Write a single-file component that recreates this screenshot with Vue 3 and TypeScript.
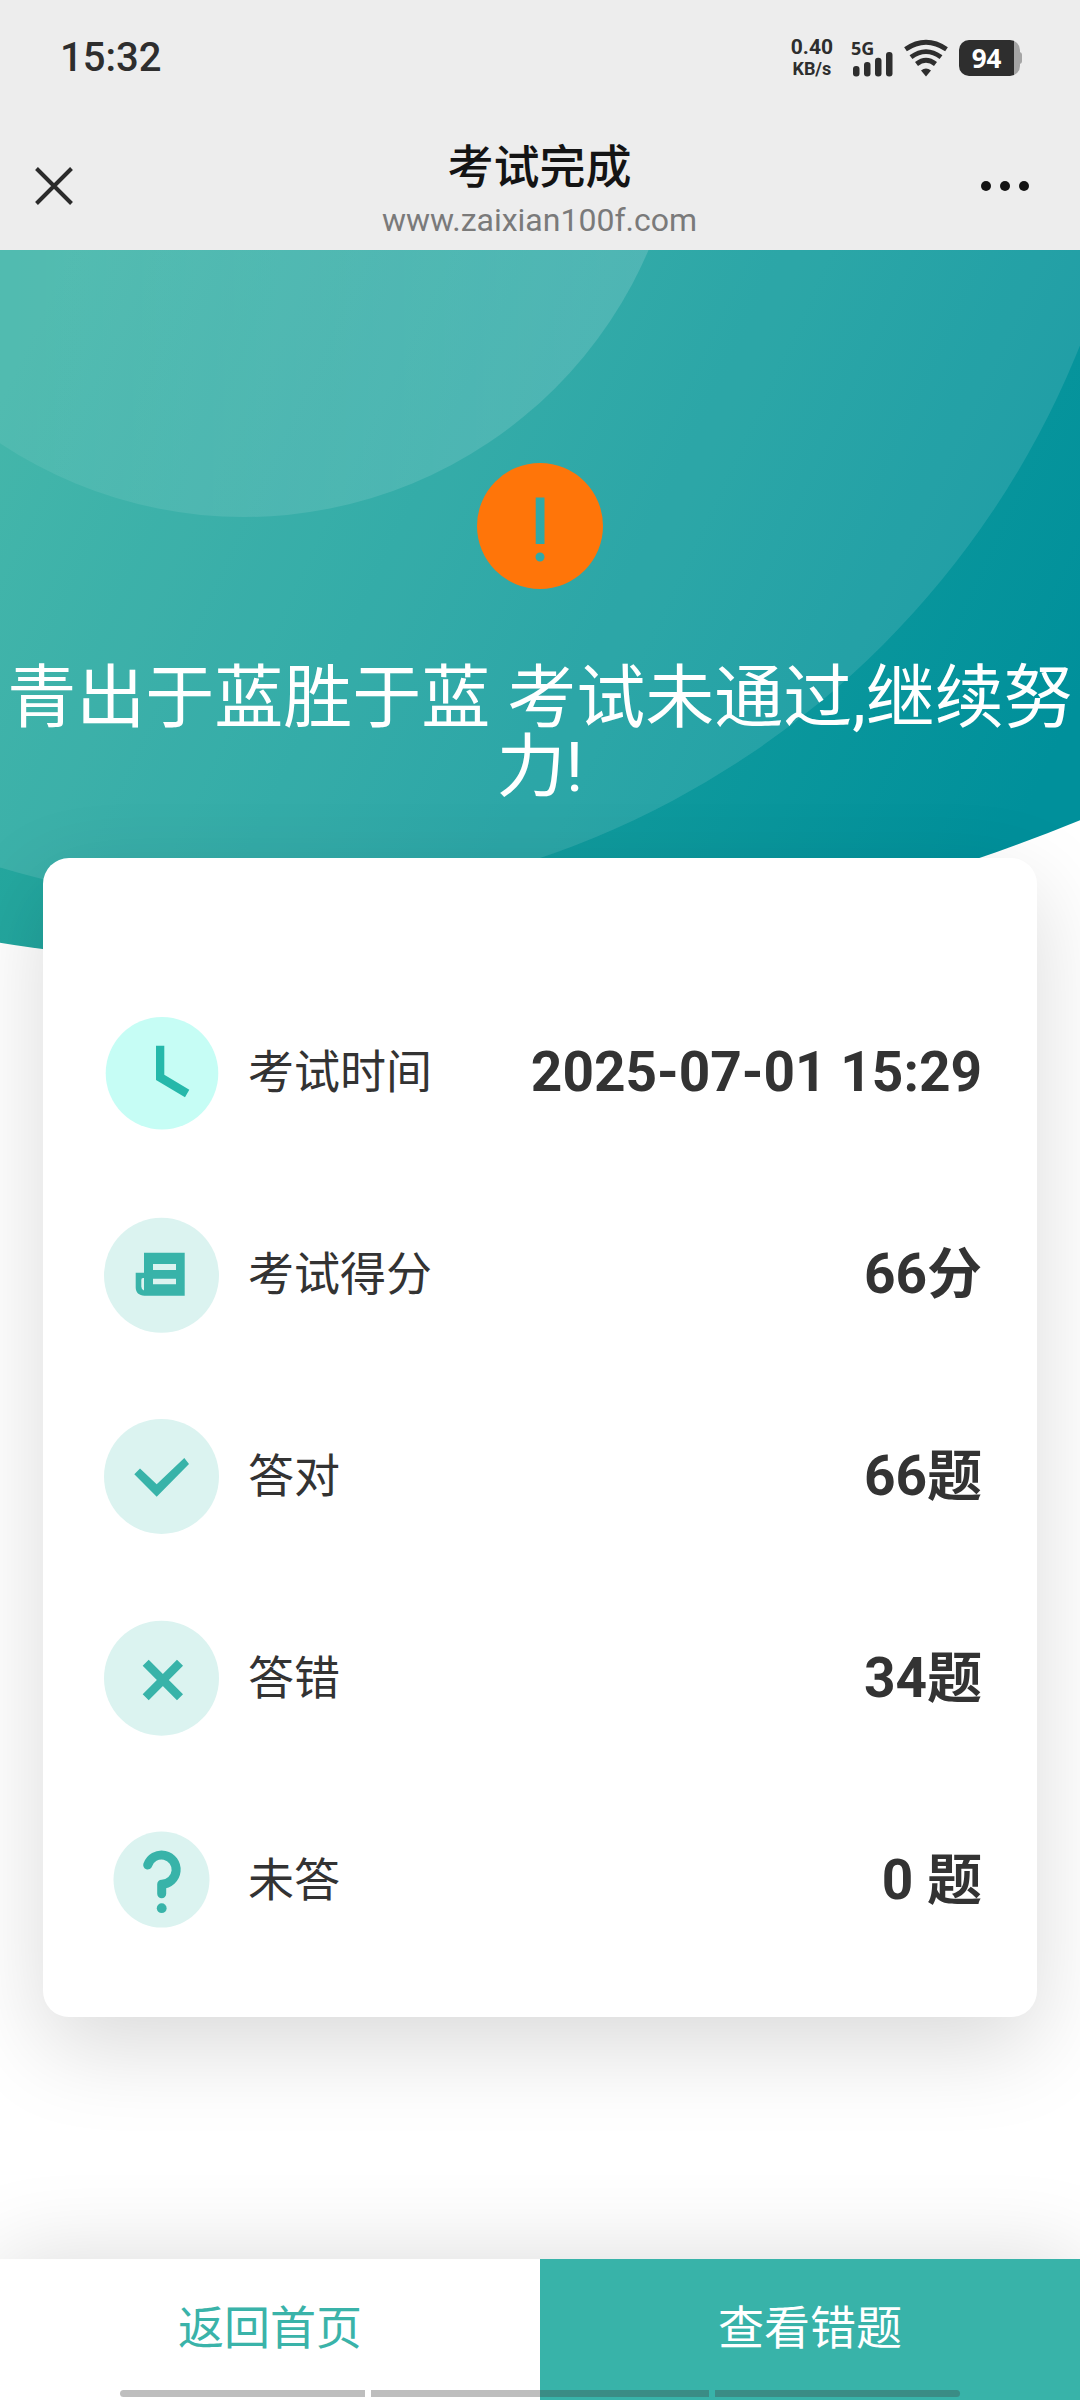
<script setup lang="ts">
type IconName = 'clock' | 'paper' | 'check' | 'cross' | 'question'

interface ResultRow {
  icon: IconName
  label: string
  value: string
}

const rows: ResultRow[] = [
  { icon: 'clock', label: '考试时间', value: '2025-07-01 15:29' },
  { icon: 'paper', label: '考试得分', value: '66分' },
  { icon: 'check', label: '答对', value: '66题' },
  { icon: 'cross', label: '答错', value: '34题' },
  { icon: 'question', label: '未答', value: '0 题' },
]
</script>

<template>
  <div class="page">
    <header class="top">
      <div class="status">
        <span class="time">15:32</span>
        <div class="indicators">
          <div class="speed">
            <span class="speed-value">0.40</span>
            <span class="speed-unit">KB/s</span>
          </div>
          <div class="signal">
            <span class="network">5G</span>
            <svg class="bars" width="42" height="26" viewBox="0 0 42 26" fill="currentColor" aria-hidden="true">
              <rect x="2" y="15" width="6.5" height="10.5" rx="3" />
              <rect x="13" y="11" width="6.5" height="14.5" rx="3" />
              <rect x="24" y="6.700" width="6.5" height="18.800" rx="3" />
              <rect x="35" y="1" width="6.5" height="24.500" rx="3" />
            </svg>
          </div>
          <svg class="wifi" width="46" height="38" viewBox="0 0 46 38" fill="none" stroke="currentColor" stroke-width="4.800" aria-hidden="true">
            <path d="M2.500 10.200Q23 -3.800 43.500 10.200" />
            <path d="M8 18.200Q23 7 38 18.200" />
            <path d="M13.500 25Q23 17.500 32.500 25" />
            <path d="M18 31.500Q23 27.500 28 31.500L23 37.500Z" fill="currentColor" stroke="none" />
          </svg>
          <div class="battery">94</div>
        </div>
      </div>
      <nav class="bar">
        <button class="icon-button" type="button" aria-label="关闭">
          <svg width="38" height="38" viewBox="0 0 38 38" fill="none" stroke="#2b2b2b" stroke-width="4" aria-hidden="true">
            <path d="M1.500 1.500L36.500 36.500M36.500 1.500L1.500 36.500" />
          </svg>
        </button>
        <div class="heading">
          <h1>考试完成</h1>
          <span class="host">www.zaixian100f.com</span>
        </div>
        <button class="icon-button more" type="button" aria-label="更多">
          <svg width="50" height="12" viewBox="0 0 50 12" fill="#141414" aria-hidden="true">
            <circle cx="6" cy="6" r="5" />
            <circle cx="25" cy="6" r="5" />
            <circle cx="44" cy="6" r="5" />
          </svg>
        </button>
      </nav>
    </header>

    <main class="content">
      <svg class="backdrop" viewBox="0 0 1080 720" aria-hidden="true">
        <defs>
          <linearGradient id="sea" gradientUnits="userSpaceOnUse" x1="0" y1="150" x2="1000" y2="620">
            <stop offset="0" stop-color="#2dada0" />
            <stop offset="1" stop-color="#00909b" />
          </linearGradient>
          <linearGradient id="veil" gradientUnits="userSpaceOnUse" x1="0" y1="0" x2="684" y2="0">
            <stop offset="0" stop-color="#fff" stop-opacity="0.070" />
            <stop offset="1" stop-color="#fff" stop-opacity="0.150" />
          </linearGradient>
          <clipPath id="hill"><circle cx="323" cy="-1281" r="2000" /></clipPath>
        </defs>
        <g clip-path="url(#hill)">
          <rect width="1080" height="720" fill="url(#sea)" />
          <circle cx="255" cy="-233" r="888" fill="#fff" fill-opacity="0.110" />
          <circle cx="244" cy="-173" r="440" fill="url(#veil)" />
        </g>
      </svg>

      <section class="outcome">
        <svg width="126" height="126" viewBox="0 0 126 126" aria-hidden="true">
          <path
            fill="#ff7509"
            fill-rule="evenodd"
            d="M63 0a63 63 0 1 1 0 126a63 63 0 1 1 0-126ZM58.700 34.500h8.800v46.500h-8.800ZM63 89.500a4.500 4.500 0 1 0 0 9a4.500 4.500 0 1 0 0-9Z"
          />
        </svg>
        <p>青出于蓝胜于蓝 考试未通过,继续努力!</p>
      </section>

      <dl class="card">
        <div v-for="row in rows" :key="row.label" class="row">
          <dt>
            <svg class="icon" width="120" height="120" viewBox="0 0 120 120" aria-hidden="true">
              <template v-if="row.icon === 'clock'">
                <circle cx="60" cy="60.300" r="56.300" fill="#c6fdf5" />
                <path d="M54 32.700H62.300V61.700L87.300 76.700L83 84.300L54 67Z" fill="#25b8aa" />
              </template>
              <template v-else-if="row.icon === 'paper'">
                <circle cx="59.500" cy="60.300" r="57.500" fill="#dbf3f0" />
                <path
                  fill="#38b3a9"
                  fill-rule="evenodd"
                  d="M42 37.700H82.700V80.700H42.500C37 80.700 33.700 77.300 33.700 72.500V57.700H42ZM51 49V55H74V49ZM51 63.700V69.200H74V63.700ZM42 63H41Q39.300 63 39.300 65V71.500Q39.300 74.500 42 75.500Z"
                />
              </template>
              <template v-else-if="row.icon === 'check'">
                <circle cx="59.500" cy="59.400" r="57.500" fill="#dbf3f0" />
                <path d="M32.300 57.300L38 51.600L54.700 67.300L82.300 40.900L87 46.900L54.700 79.800Z" fill="#38b3a9" />
              </template>
              <template v-else-if="row.icon === 'cross'">
                <circle cx="59.500" cy="59.200" r="57.500" fill="#dbf3f0" />
                <path d="M43.700 43.700L78 78.300M78 43.700L43.700 78.300" fill="none" stroke="#38b3a9" stroke-width="8.500" />
              </template>
              <template v-else>
                <circle cx="59.500" cy="58.600" r="48" fill="#dbf3f0" />
                <path
                  d="M45.700 44A14.600 14.600 0 1 1 59.700 63.200V72.700"
                  fill="none"
                  stroke="#38b3a9"
                  stroke-width="9"
                  stroke-linecap="round"
                  stroke-linejoin="round"
                />
                <circle cx="59.700" cy="87.200" r="4.900" fill="#38b3a9" />
              </template>
            </svg>
            <span class="label">{{ row.label }}</span>
          </dt>
          <dd>{{ row.value }}</dd>
        </div>
      </dl>
    </main>

    <footer class="actions">
      <button class="home" type="button">返回首页</button>
      <button class="review" type="button">查看错题</button>
      <div class="gesture" aria-hidden="true"><i></i><i></i><i></i></div>
    </footer>
  </div>
</template>

<style>
body {
  margin: 0;
  background: #fff;
}
</style>

<style scoped>
.page {
  display: flex;
  flex-direction: column;
  min-height: 100vh;
  overflow: hidden;
  background: #fff;
  color: #333;
  font-family: Roboto, "Noto Sans CJK SC", sans-serif;
}

button {
  margin: 0;
  padding: 0;
  border: 0;
  background: none;
  font: inherit;
}

svg {
  display: block;
  flex: none;
}

.top {
  position: relative;
  background: #ededed;
}

.status {
  display: flex;
  align-items: center;
  justify-content: space-between;
  height: 116px;
  padding: 0 60px;
  color: #2e2e2e;
}

.time {
  font-size: 40px;
  font-weight: 500;
  line-height: 48px;
}

.indicators {
  display: flex;
  align-items: center;
}

.speed {
  display: flex;
  flex-direction: column;
  align-items: center;
  margin-right: 18px;
  font-weight: 700;
}

.speed-value {
  font-size: 21px;
  line-height: 22px;
}

.speed-unit {
  font-size: 18px;
  line-height: 22px;
}

.signal {
  display: grid;
  margin-right: 10px;
}

.network {
  grid-area: 1 / 1;
  font-family: "Noto Sans", sans-serif;
  font-size: 18px;
  font-weight: 700;
  line-height: 18px;
}

.bars {
  grid-area: 1 / 1;
  margin-top: 12px;
}

.wifi {
  margin-right: 10px;
}

.battery {
  position: relative;
  width: 61px;
  height: 36px;
  padding-right: 6px;
  box-sizing: border-box;
  border-radius: 10px;
  background: linear-gradient(to right, #2e2e2e 55px, #a5a5a5 55px);
  color: #fff;
  font-family: "Noto Sans", sans-serif;
  font-size: 26px;
  font-weight: 700;
  line-height: 36px;
  text-align: center;
}

.battery::after {
  content: "";
  position: absolute;
  top: 12px;
  left: 100%;
  width: 3px;
  height: 12px;
  margin-left: -1px;
  border-radius: 0 3px 3px 0;
  background: #a5a5a5;
}

.bar {
  display: grid;
  grid-template-columns: 1fr auto 1fr;
  align-items: center;
  height: 134px;
  padding: 5px 36px 0 35px;
  box-sizing: border-box;
}

.icon-button {
  display: flex;
  align-items: center;
  justify-self: start;
  height: 80px;
}

.more {
  justify-self: end;
  margin-right: 14px;
}

.heading {
  display: flex;
  flex-direction: column;
  align-items: center;
  padding-top: 12px;
}

h1 {
  margin: 0;
  color: #141414;
  font-size: 46px;
  font-weight: 500;
  line-height: 56px;
}

.host {
  color: #7a7a7a;
  font-size: 32px;
  line-height: 50px;
}

.content {
  position: relative;
  padding: 0 43px 120px;
}

.backdrop {
  position: absolute;
  top: 0;
  left: 0;
  width: 100%;
  height: auto;
}

.outcome {
  position: relative;
  display: flex;
  flex-direction: column;
  align-items: center;
  margin: 0 -43px;
  padding: 213px 0 56px;
}

.outcome p {
  margin: 75px 0 0;
  color: #fff;
  font-size: 69px;
  line-height: 69px;
  text-align: center;
}

.card {
  position: relative;
  margin: 0;
  padding: 114px 55px 35px 59px;
  border-radius: 26px;
  background: #fff;
  box-shadow: 0 30px 90px rgba(0, 0, 0, 0.15);
}

.row {
  display: flex;
  align-items: center;
  justify-content: space-between;
  height: 202px;
}

dt {
  display: flex;
  align-items: center;
  gap: 26px;
}

.label {
  padding-bottom: 3px;
  font-size: 46px;
  line-height: 60px;
}

dd {
  margin: 0;
  padding-bottom: 3px;
  font-size: 55px;
  font-weight: 700;
  line-height: 60px;
}

.actions {
  position: relative;
  display: flex;
  height: 141px;
  margin-top: auto;
  box-shadow: 0 0 90px rgba(0, 0, 0, 0.15);
}

.actions button {
  flex: 1;
  padding-bottom: 4px;
  font-size: 46px;
  line-height: 60px;
}

.home {
  background: #fff;
  color: #3ab3a9;
}

.actions .review {
  background: #38b3a9;
  color: #fff;
}

.gesture {
  position: absolute;
  right: 120px;
  bottom: 3px;
  left: 120px;
  display: flex;
  gap: 6px;
}

.gesture i {
  flex: 245;
  height: 7px;
  background: rgba(64, 64, 64, 0.34);
}

.gesture i:first-child {
  border-radius: 4px 0 0 4px;
}

.gesture i:nth-child(2) {
  flex: 338;
}

.gesture i:last-child {
  border-radius: 0 4px 4px 0;
}
</style>
